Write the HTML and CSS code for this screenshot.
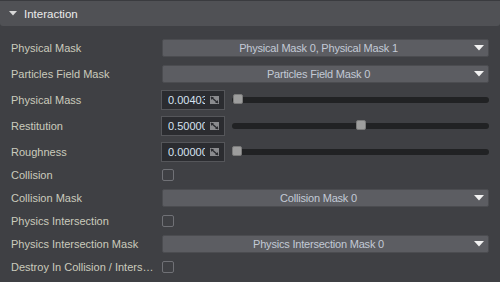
FILE: index.html
```html
<!DOCTYPE html>
<html>
  <head>
    <meta charset="utf-8" />
    <title>Interaction</title>
    <link rel="stylesheet" href="styles.css">
  </head>
  <body>
    <div class="panel">
      <!-- section header -->
      <div class="panel-header">
        <svg class="caret" width="8" height="5" viewBox="0 0 8 5"><path d="M0 0H8L4 4.5Z" fill="#d8d8d8"/></svg>
        <span>Interaction</span>
      </div>

      <div class="props">
        <div class="row wide">
          <div class="label">Physical Mask</div>
          <div class="combo"><span class="combo-text">Physical Mask 0, Physical Mask 1</span><svg class="arrow" width="10" height="6" viewBox="0 0 10 6"><path d="M0 0H10L5 5.5Z" fill="#f2f2f2"/></svg></div>
        </div>
        <div class="row wide">
          <div class="label">Particles Field Mask</div>
          <div class="combo"><span class="combo-text">Particles Field Mask 0</span><svg class="arrow" width="10" height="6" viewBox="0 0 10 6"><path d="M0 0H10L5 5.5Z" fill="#f2f2f2"/></svg></div>
        </div>
        <div class="row wide">
          <div class="label">Physical Mass</div>
          <div class="slider-control">
            <div class="num-field"><span class="num-text">0.0040312</span><svg class="drag" width="9" height="8" viewBox="0 0 9 8"><path d="M0 0H9V8H0Z" fill="#8a8b8e"/><path d="M1 1L8 7" stroke="#2b2c30" stroke-width="1.4"/><path d="M1 1H4L1 4Z" fill="#2b2c30"/><path d="M8 7H5L8 4Z" fill="#2b2c30"/></svg></div>
            <div class="track"><div class="thumb" style="--v:0.004"></div></div>
          </div>
        </div>
        <div class="row wide">
          <div class="label">Restitution</div>
          <div class="slider-control">
            <div class="num-field"><span class="num-text">0.500000</span><svg class="drag" width="9" height="8" viewBox="0 0 9 8"><path d="M0 0H9V8H0Z" fill="#8a8b8e"/><path d="M1 1L8 7" stroke="#2b2c30" stroke-width="1.4"/><path d="M1 1H4L1 4Z" fill="#2b2c30"/><path d="M8 7H5L8 4Z" fill="#2b2c30"/></svg></div>
            <div class="track"><div class="thumb" style="--v:0.5"></div></div>
          </div>
        </div>
        <div class="row">
          <div class="label">Roughness</div>
          <div class="slider-control">
            <div class="num-field"><span class="num-text">0.000000</span><svg class="drag" width="9" height="8" viewBox="0 0 9 8"><path d="M0 0H9V8H0Z" fill="#8a8b8e"/><path d="M1 1L8 7" stroke="#2b2c30" stroke-width="1.4"/><path d="M1 1H4L1 4Z" fill="#2b2c30"/><path d="M8 7H5L8 4Z" fill="#2b2c30"/></svg></div>
            <div class="track"><div class="thumb" style="--v:0"></div></div>
          </div>
        </div>
        <div class="row">
          <div class="label">Collision</div>
          <div class="check"></div>
        </div>
        <div class="row">
          <div class="label">Collision Mask</div>
          <div class="combo"><span class="combo-text">Collision Mask 0</span><svg class="arrow" width="10" height="6" viewBox="0 0 10 6"><path d="M0 0H10L5 5.5Z" fill="#f2f2f2"/></svg></div>
        </div>
        <div class="row">
          <div class="label">Physics Intersection</div>
          <div class="check"></div>
        </div>
        <div class="row">
          <div class="label">Physics Intersection Mask</div>
          <div class="combo"><span class="combo-text">Physics Intersection Mask 0</span><svg class="arrow" width="10" height="6" viewBox="0 0 10 6"><path d="M0 0H10L5 5.5Z" fill="#f2f2f2"/></svg></div>
        </div>
        <div class="row">
          <div class="label">Destroy In Collision / Intersection</div>
          <div class="check"></div>
        </div>
      </div>
    </div>
  </body>
</html>
```

FILE: styles.css
```css
* {
  box-sizing: border-box;
}
body {
  margin: 0;
  background-color: #3f4044;
  font-family: "Liberation Sans", Arial, sans-serif;
  font-size: 11px;
}

/* header */
.panel-header {
  height: 26px;
  display: flex;
  align-items: center;
  background-color: #505155;
  border-top: 1px solid #3a3b3f;
  border-radius: 0 0 3px 3px;
  color: #ececec;
  font-size: 11.5px;
  padding-left: 9px;
}
.caret {
  margin-right: 7px;
}

/* property rows */
.props {
  padding: 11px 11px 0 11px;
}
.row {
  height: 22px;
  margin-bottom: 1px;
  display: flex;
  align-items: center;
}
.row.wide {
  margin-bottom: 4px;
}
.label {
  width: 151px;
  flex-shrink: 0;
  padding-right: 6px;
  color: #cbcbbd;
  white-space: nowrap;
  overflow: hidden;
  text-overflow: ellipsis;
}

/* combo box */
.combo {
  flex: 1;
  height: 18px;
  display: flex;
  align-items: center;
  background-color: #5c5d62;
  border: 1px solid #4b4c50;
  border-radius: 2px;
  color: #c3cad6;
}
.combo-text {
  flex: 1;
  text-align: center;
  padding-left: 2px;
  letter-spacing: -0.2px;
}
.arrow {
  margin: 0 4px 0 2px;
}

/* number + slider */
.slider-control {
  flex: 1;
  display: flex;
  align-items: center;
  gap: 7px;
}
.num-field {
  width: 64px;
  height: 20px;
  margin-left: -1px;
  display: flex;
  align-items: center;
  background-color: #2b2c30;
  border: 1px solid #55565a;
  padding: 0 5px 0 6px;
  color: #d6e2f0;
}
.num-text {
  width: 37px;
  overflow: hidden;
  white-space: nowrap;
  margin-right: 5px;
}
.track {
  flex: 1;
  height: 6px;
  position: relative;
  background-color: #212224;
  border-radius: 3px;
}
.thumb {
  position: absolute;
  top: -3px;
  left: calc(var(--v) * (100% - 10px));
  width: 10px;
  height: 10px;
  border-radius: 2px;
  background-color: #9d9d9d;
  border: 1px solid #7a7a7a;
}

/* checkbox */
.check {
  width: 12px;
  height: 12px;
  border: 1px solid #707176;
  border-radius: 2px;
}
```
